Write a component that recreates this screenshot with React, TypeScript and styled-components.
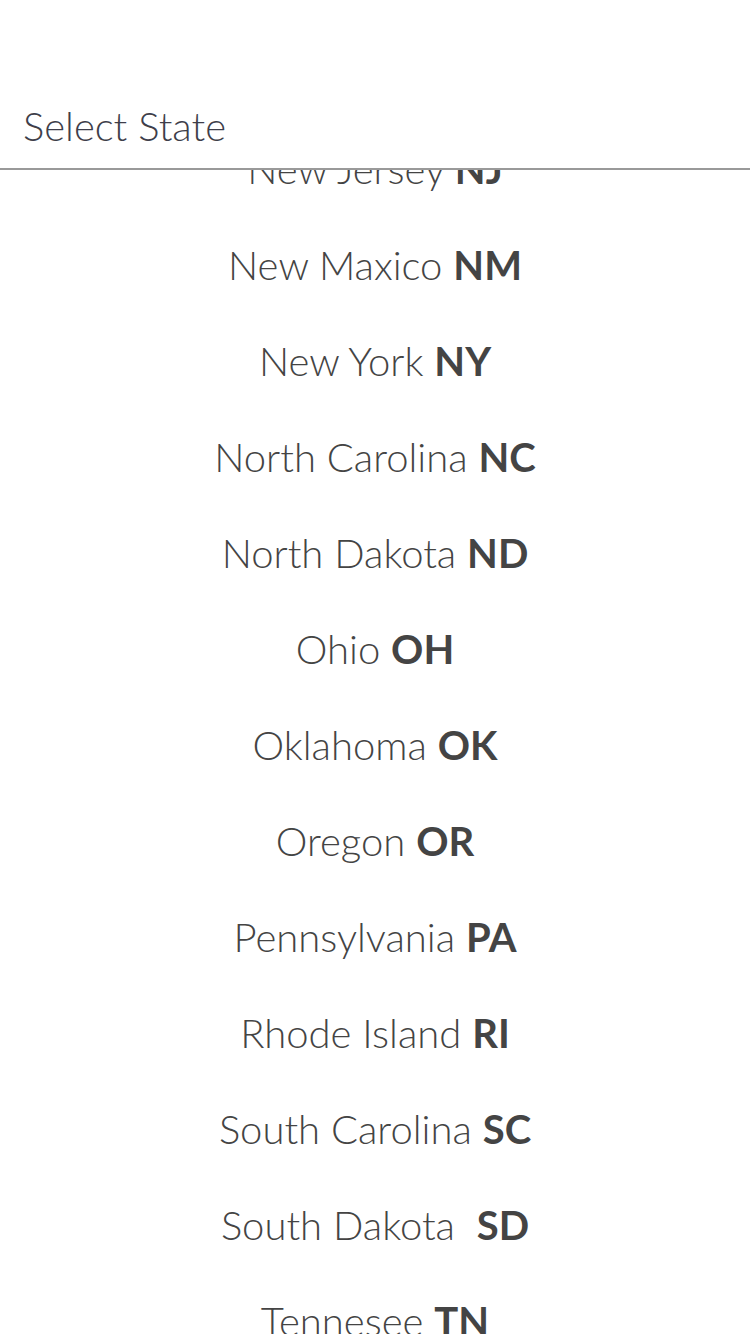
import React, { useLayoutEffect, useRef } from 'react';
import styled, { createGlobalStyle } from 'styled-components';

const GlobalStyle = createGlobalStyle`
  html, body {
    margin: 0;
    padding: 0;
    background: #ffffff;
    font-family: Lato, "Open Sans", sans-serif;
  }
`;

const ROW_HEIGHT = 96;

const states: [string, string][] = [
  ['Alabama', 'AL'],
  ['Alaska', 'AK'],
  ['Arizona', 'AZ'],
  ['Arkansas', 'AR'],
  ['California', 'CA'],
  ['Colorado', 'CO'],
  ['Connecticut', 'CT'],
  ['Delaware', 'DE'],
  ['Florida', 'FL'],
  ['Georgia', 'GA'],
  ['Hawaii', 'HI'],
  ['Idaho', 'ID'],
  ['Illinois', 'IL'],
  ['Indiana', 'IN'],
  ['Iowa', 'IA'],
  ['Kansas', 'KS'],
  ['Kentucky', 'KY'],
  ['Louisiana', 'LA'],
  ['Maine', 'ME'],
  ['Maryland', 'MD'],
  ['Massachusetts', 'MA'],
  ['Michigan', 'MI'],
  ['Minnesota', 'MN'],
  ['Mississippi', 'MS'],
  ['Missouri', 'MO'],
  ['Montana', 'MT'],
  ['Nebraska', 'NE'],
  ['Nevada', 'NV'],
  ['New Hampshire', 'NH'],
  ['New Jersey', 'NJ'],
  ['New Maxico', 'NM'],
  ['New York', 'NY'],
  ['North Carolina', 'NC'],
  ['North Dakota', 'ND'],
  ['Ohio', 'OH'],
  ['Oklahoma', 'OK'],
  ['Oregon', 'OR'],
  ['Pennsylvania', 'PA'],
  ['Rhode Island', 'RI'],
  ['South Carolina', 'SC'],
  ['South Dakota ', 'SD'],
  ['Tennesee', 'TN'],
  ['Texas', 'TX'],
  ['Utah', 'UT'],
  ['Vermont', 'VT'],
  ['Virginia', 'VA'],
  ['Washington', 'WA'],
  ['West Virginia', 'WV'],
  ['Wisconsin', 'WI'],
  ['Wyoming', 'WY'],
];

const App: React.FC = () => {
  const listRef = useRef<HTMLDivElement>(null);

  useLayoutEffect(() => {
    // start the list half way through New Jersey, as in the picker
    const idx = states.findIndex(([name]) => name === 'New Jersey');
    if (listRef.current) {
      listRef.current.scrollTop = idx * ROW_HEIGHT + ROW_HEIGHT / 2 + 1;
    }
  }, []);

  return (
    <>
      <GlobalStyle />
      <Screen>
        <Header>
          <Title>Select State</Title>
        </Header>
        <List ref={listRef}>
          {states.map(([name, code]) => (
            <Row key={code}>
              <Name>{name} </Name>
              <Code>{code}</Code>
            </Row>
          ))}
        </List>
      </Screen>
    </>
  );
};

const Screen = styled.div`
  display: flex;
  flex-direction: column;
  width: 750px;
  height: 1334px;
  overflow: hidden;
`;

const Header = styled.div`
  flex: none;
  height: 170px;
  display: flex;
  align-items: flex-end;
  padding: 0 23px 18px;
  box-sizing: border-box;
  border-bottom: 2px solid #999999;
`;

const Title = styled.div`
  font-family: Lato, "Open Sans", sans-serif;
  font-weight: 300;
  font-size: 40px;
  line-height: 48px;
  color: #3e3e4a;
`;

const List = styled.div`
  flex: 1;
  overflow-y: auto;
  scrollbar-width: none;
  &::-webkit-scrollbar {
    display: none;
  }
`;

const Row = styled.div`
  height: ${ROW_HEIGHT}px;
  display: flex;
  align-items: center;
  justify-content: center;
  font-size: 40px;
  color: #444444;
  white-space: pre;
`;

const Name = styled.span`
  font-weight: 300;
`;

const Code = styled.span`
  font-weight: 700;
`;

export default App;
